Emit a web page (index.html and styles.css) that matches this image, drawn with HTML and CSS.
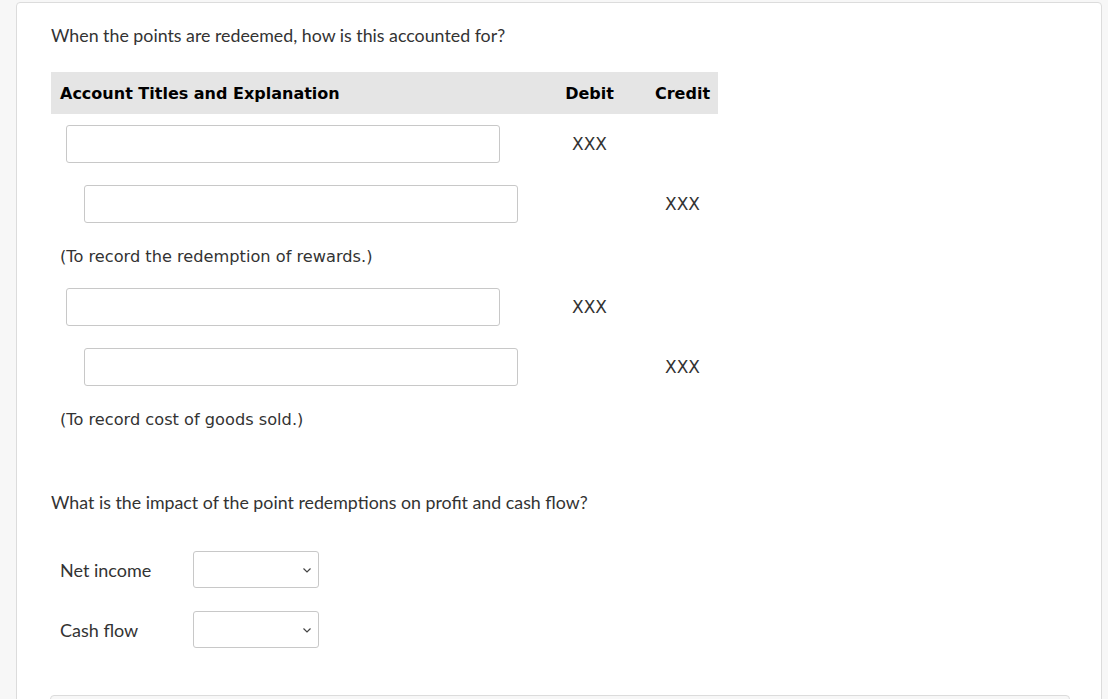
FILE: index.html
```html
<!DOCTYPE html>
<html lang="en">
<head>
    <meta charset="UTF-8">
    <meta name="viewport" content="width=device-width, initial-scale=1.0">
    <title>Point redemptions</title>
    <link rel="stylesheet" href="styles.css">
</head>
<body>
    <div class="card">
        <p class="question">When the points are redeemed, how is this accounted for?</p>

        <div class="journal">
            <div class="row head">
                <div class="title">Account Titles and Explanation</div>
                <div class="debit">Debit</div>
                <div class="credit">Credit</div>
            </div>
            <div class="row entry">
                <div class="title"><input type="text" class="acct"></div>
                <div class="debit">XXX</div>
                <div class="credit"></div>
            </div>
            <div class="row entry">
                <div class="title indent"><input type="text" class="acct"></div>
                <div class="debit"></div>
                <div class="credit">XXX</div>
            </div>
            <div class="row note">
                <div class="title">(To record the redemption of rewards.)</div>
            </div>
            <div class="row entry">
                <div class="title"><input type="text" class="acct"></div>
                <div class="debit">XXX</div>
                <div class="credit"></div>
            </div>
            <div class="row entry">
                <div class="title indent"><input type="text" class="acct"></div>
                <div class="debit"></div>
                <div class="credit">XXX</div>
            </div>
            <div class="row note">
                <div class="title">(To record cost of goods sold.)</div>
            </div>
        </div>

        <p class="question second">What is the impact of the point redemptions on profit and cash flow?</p>

        <div class="impact">
            <label class="field">
                <span class="label">Net income</span>
                <span class="select-wrap">
                    <select class="pick"><option></option><option>Increase</option><option>Decrease</option><option>No effect</option></select>
                    <svg class="chevron" width="8" height="5" viewBox="0 0 8 5"><path d="M0.5 0.5 L4 4 L7.5 0.5" fill="none" stroke="#444" stroke-width="1.2"/></svg>
                </span>
            </label>
            <label class="field">
                <span class="label">Cash flow</span>
                <span class="select-wrap">
                    <select class="pick"><option></option><option>Increase</option><option>Decrease</option><option>No effect</option></select>
                    <svg class="chevron" width="8" height="5" viewBox="0 0 8 5"><path d="M0.5 0.5 L4 4 L7.5 0.5" fill="none" stroke="#444" stroke-width="1.2"/></svg>
                </span>
            </label>
        </div>

        <div class="footer-box"></div>
    </div>
</body>
</html>
```

FILE: styles.css
```css
html, body {
    margin: 0;
    padding: 0;
}

body {
    background: #f7f7f7;
    font-family: Lato, "Open Sans", sans-serif;
    color: #333;
    padding: 2px 6px 0 16px;
    height: 699px;
    overflow: hidden;
    box-sizing: border-box;
}

.card {
    background: #fff;
    border: 1px solid #dcdcdc;
    border-radius: 4px;
    padding: 21px 0 0 34px;
    height: 760px;
    box-sizing: border-box;
}

.question {
    margin: 0;
    font-size: 17.8px;
    line-height: 22px;
}

.journal {
    margin-top: 26px;
    width: 667px;
}

.row {
    display: grid;
    grid-template-columns: 481px 115px 71px;
    align-items: center;
}

.head {
    background: #e5e5e5;
    height: 42px;
    font-family: "DejaVu Sans", Verdana, sans-serif;
    font-weight: bold;
    font-size: 16px;
    color: #000;
}

.head .title {
    padding-left: 9px;
}

.debit, .credit {
    text-align: center;
}

.entry {
    height: 60px;
    font-family: "DejaVu Sans", Verdana, sans-serif;
    font-size: 17px;
    color: #333;
}

.entry .title {
    padding-left: 15px;
}

.entry .title.indent {
    padding-left: 33px;
}

.acct {
    display: block;
    width: 434px;
    height: 38px;
    box-sizing: border-box;
    border: 1px solid #c8c8c8;
    border-radius: 3px;
    background: #fff;
    margin: 0;
}

.note {
    height: 43px;
    font-family: "DejaVu Sans", Verdana, sans-serif;
    font-size: 16.2px;
    color: #333;
}

.note .title {
    padding: 2px 0 0 9px;
}

.second {
    margin-top: 51px;
}

.impact {
    margin-top: 38px;
    display: flex;
    flex-direction: column;
    gap: 23px;
}

.field {
    display: flex;
    align-items: center;
    padding-left: 9px;
}

.label {
    width: 133px;
    font-size: 18px;
}

.select-wrap {
    position: relative;
    display: block;
}

.pick {
    display: block;
    width: 126px;
    height: 37px;
    border: 1px solid #c8c8c8;
    border-radius: 3px;
    background: #fff;
    margin: 0;
    appearance: none;
    -webkit-appearance: none;
}

.chevron {
    position: absolute;
    right: 8px;
    top: 17px;
    pointer-events: none;
}

.footer-box {
    margin-top: 47px;
    width: 1018px;
    height: 40px;
    margin-left: -1px;
    border: 1px solid #dcdcdc;
    border-radius: 4px;
    background: #f7f7f7;
}
```
